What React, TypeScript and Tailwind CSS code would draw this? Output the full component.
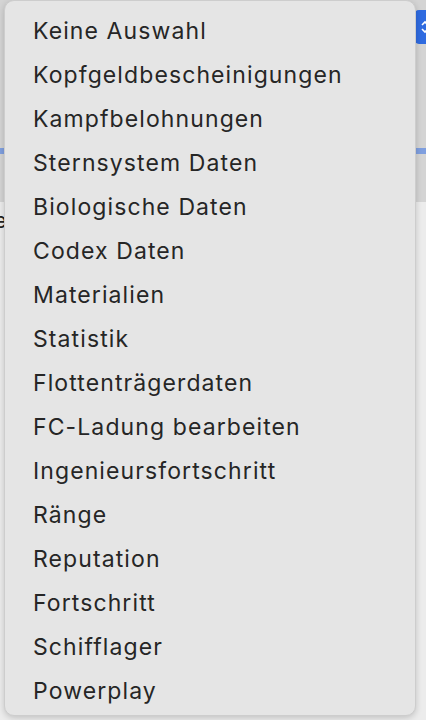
import React from "react";

const items = [
  "Keine Auswahl",
  "Kopfgeldbescheinigungen",
  "Kampfbelohnungen",
  "Sternsystem Daten",
  "Biologische Daten",
  "Codex Daten",
  "Materialien",
  "Statistik",
  "Flottenträgerdaten",
  "FC-Ladung bearbeiten",
  "Ingenieursfortschritt",
  "Ränge",
  "Reputation",
  "Fortschritt",
  "Schifflager",
  "Powerplay",
];

export default function App() {
  return (
    <div className="relative w-[426px] h-[720px] overflow-hidden bg-[#ececec]" style={{ fontFamily: "Inter, 'Noto Sans', sans-serif" }}>
      {/* background content behind the menu */}
      <div className="absolute left-0 top-0 w-[426px] h-[202px] bg-[#d4d4d4]" />
      <div className="absolute left-0 top-[148px] w-[426px] h-[6px] bg-[#7f9fdf]" />
      <div className="absolute left-[414px] top-[10px] w-[20px] h-[34px] rounded-[5px] bg-[#2f6be0] flex items-center justify-center">
        <svg width="8" height="20" viewBox="0 0 8 20" className="ml-[2px]">
          <path d="M1 8 L4 5 L7 8 M1 12 L4 15 L7 12" stroke="white" strokeWidth="1.6" fill="none" />
        </svg>
      </div>
      <div className="absolute left-[-6px] top-[204px] text-[22px] text-[#222]">e</div>

      {/* popup menu */}
      <div className="absolute left-[4px] top-0 w-[412px] h-[716px] rounded-[10px] bg-[#e5e5e5] border border-[#cdcdcd] shadow-[0_2px_6px_rgba(0,0,0,0.18)] pt-[8px]">
        <div className="flex flex-col">
          {items.map((t) => (
            <div key={t} className="h-[44px] flex items-center pl-[28px] text-[23px] text-[#262626] tracking-[1.1px]">
              {t}
            </div>
          ))}
        </div>
      </div>
    </div>
  );
}
